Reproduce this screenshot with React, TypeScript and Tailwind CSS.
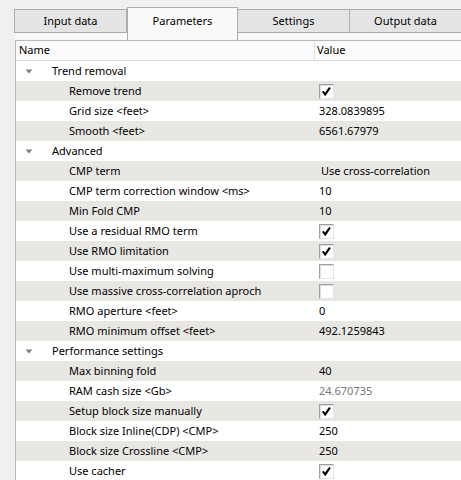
import React from 'react';

type Row = {
  cat?: string;
  name?: string;
  value?: string;
  check?: boolean;
  disabled?: boolean;
  indent?: boolean;
};

const rows: Row[] = [
  { cat: 'Trend removal' },
  { name: 'Remove trend', check: true },
  { name: 'Grid size <feet>', value: '328.0839895' },
  { name: 'Smooth <feet>', value: '6561.67979' },
  { cat: 'Advanced' },
  { name: 'CMP term', value: 'Use cross-correlation', indent: true },
  { name: 'CMP term correction window <ms>', value: '10' },
  { name: 'Min Fold CMP', value: '10' },
  { name: 'Use a residual RMO term', check: true },
  { name: 'Use RMO limitation', check: true },
  { name: 'Use multi-maximum solving', check: false },
  { name: 'Use massive cross-correlation aproch', check: false },
  { name: 'RMO aperture <feet>', value: '0' },
  { name: 'RMO minimum offset <feet>', value: '492.1259843' },
  { cat: 'Performance settings' },
  { name: 'Max binning fold', value: '40' },
  { name: 'RAM cash size <Gb>', value: '24.670735', disabled: true },
  { name: 'Setup block size manually', check: true },
  { name: 'Block size Inline(CDP) <CMP>', value: '250' },
  { name: 'Block size Crossline <CMP>', value: '250' },
  { name: 'Use cacher', check: true },
];

const tabs = ['Input data', 'Parameters', 'Settings', 'Output data'];

function CheckBox({ checked }: { checked: boolean }) {
  return (
    <div className="w-[15px] h-[15px] border border-t-[#a0a0a0] border-l-[#a0a0a0] border-b-[#e3e3e3] border-r-[#e3e3e3] bg-white">
      <div className="w-full h-full border border-t-[#dcdcdc] border-l-[#dcdcdc] border-b-white border-r-white">
        {checked && (
          <svg width="11" height="11" viewBox="0 0 11 11">
            <path d="M1.8 5.4 L4.2 8.4 L8.9 1.6" fill="none" stroke="#000" strokeWidth="2.1" />
          </svg>
        )}
      </div>
    </div>
  );
}

export default function App() {
  return (
    <div
      className="w-[461px] h-[480px] overflow-hidden bg-[#f0f0f0] text-black text-[11px]"
      style={{ fontFamily: '"Noto Sans", sans-serif' }}
    >
      {/* tab bar */}
      <div className="flex pl-[15px] pt-[7px]">
        {tabs.map((t) =>
          t === 'Parameters' ? (
            <div
              key={t}
              className="w-[111px] h-[33px] shrink-0 border-t border-l border-r border-[#adadad] bg-[#f9f9f9] flex justify-center pt-[5px]"
            >
              {t}
            </div>
          ) : (
            <div key={t} className="w-[112px] shrink-0 flex flex-col">
              <div className="h-[2px]" />
              <div className="h-[24px] border border-[#adadad] bg-[#e4e4e4] flex items-center justify-center pt-px -ml-px first:ml-0">
                {t}
              </div>
              <div className="h-[7px] bg-[#f9f9f9]" />
            </div>
          )
        )}
      </div>

      {/* tree */}
      <div className="ml-[15px] border-t border-l border-[#b9b9b9] bg-white">
        <div className="flex h-[20px] border-b border-[#d8d8d8] bg-[#fbfbfb]">
          <div className="w-[299px] shrink-0 border-r border-[#e0e0e0] pl-[3px] flex items-center">Name</div>
          <div className="pl-[2px] flex items-center">Value</div>
        </div>
        {rows.map((r, i) => (
          <div
            key={i}
            className={`flex h-[20px] items-center ${i % 2 === 1 ? 'bg-[#e9e7e3]' : 'bg-white'}`}
          >
            {r.cat ? (
              <div className="flex items-center">
                <svg width="8" height="5" viewBox="0 0 8 5" className="ml-[9px] mr-[20px]">
                  <path d="M0.5 0.5 L7.5 0.5 L4 4.5 Z" fill="#808080" />
                </svg>
                <span className="-ml-[1px]">{r.cat}</span>
              </div>
            ) : (
              <>
                <div className="w-[300px] shrink-0 pl-[53px] whitespace-nowrap overflow-hidden">{r.name}</div>
                <div className={`${r.indent ? 'pl-[5px]' : 'pl-[3px]'} ${r.disabled ? 'text-[#787878]' : ''}`}>
                  {r.check !== undefined ? <CheckBox checked={r.check} /> : r.value}
                </div>
              </>
            )}
          </div>
        ))}
      </div>
    </div>
  );
}
